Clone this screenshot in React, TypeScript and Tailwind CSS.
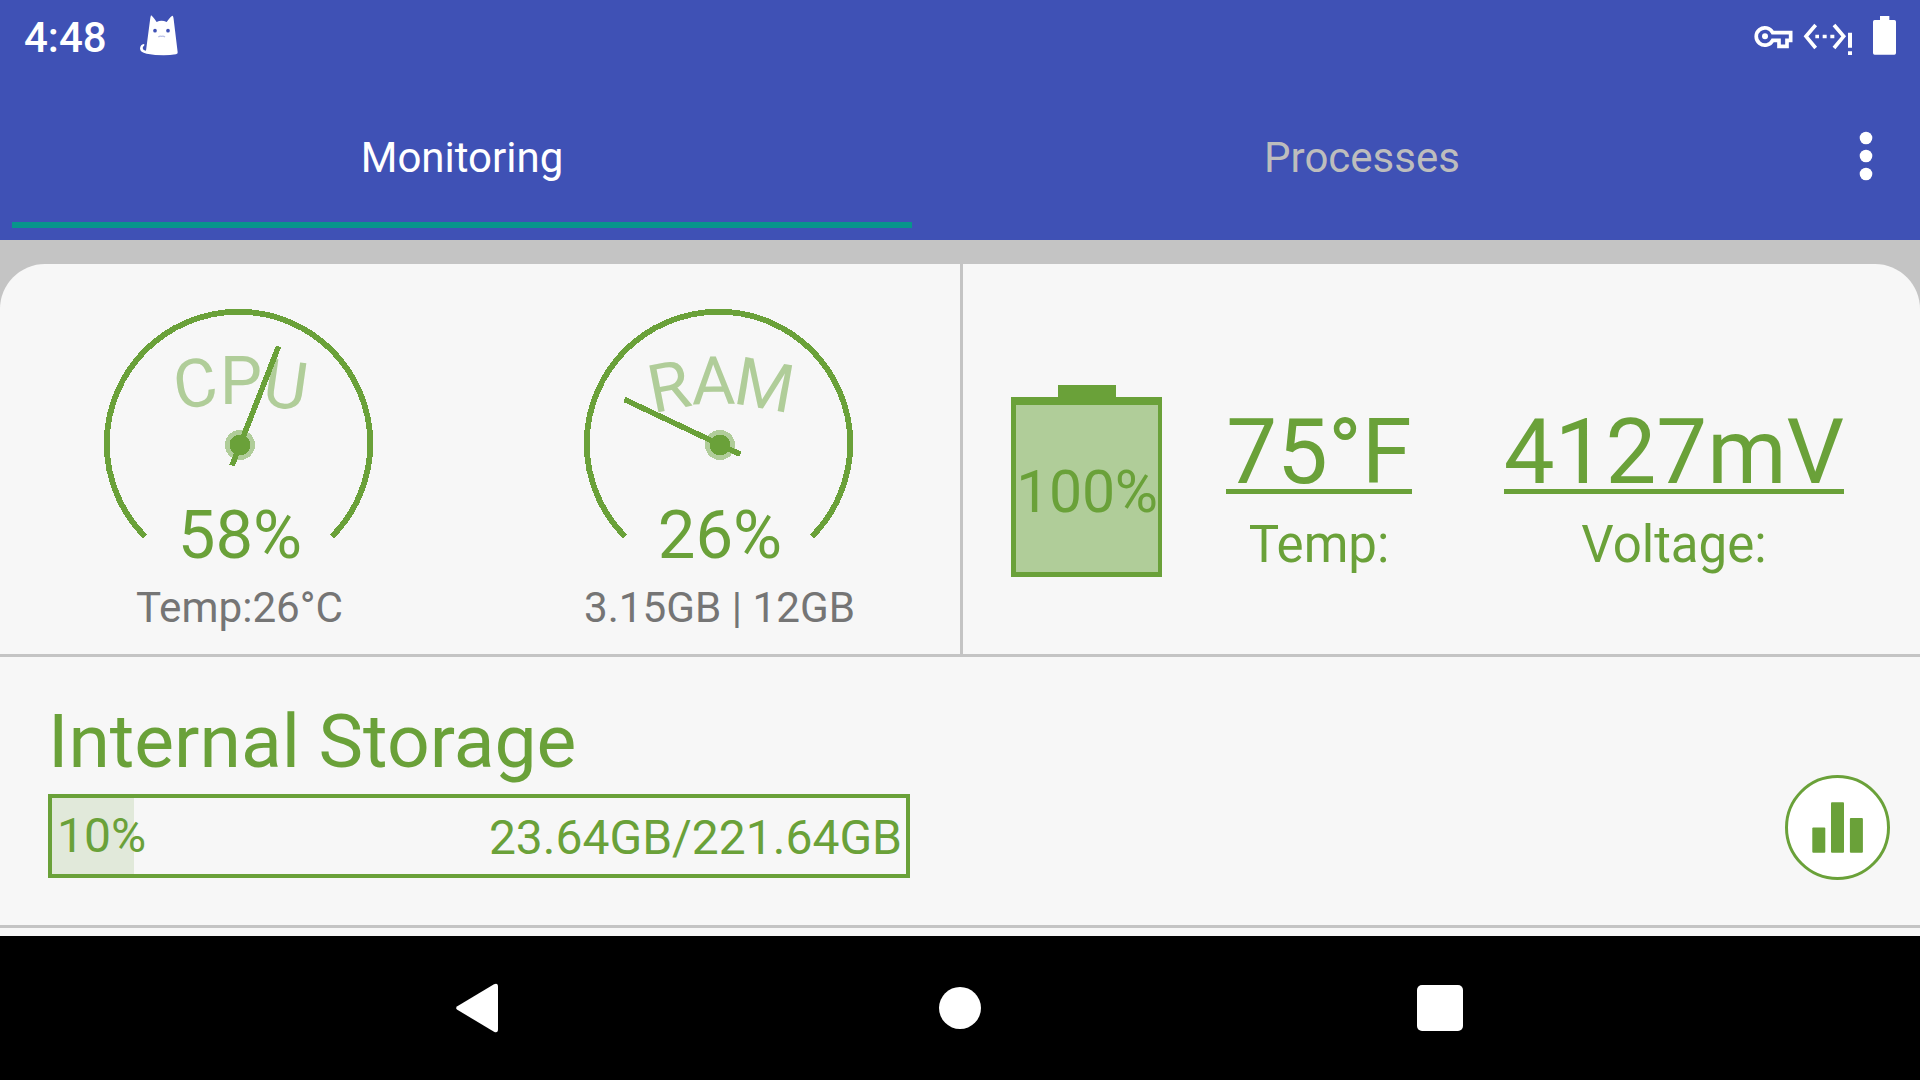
import React from "react";

const GREEN = "#6aa139";
const PALE = "#b0cd99";

type Letter = { char: string; x: number; y: number; angle: number };

type GaugeProps = {
  letters: Letter[];
  percent: string;
  needle: [number, number, number, number];
  caption: string;
};

function Gauge({ letters, percent, needle, caption }: GaugeProps) {
  const [x1, y1, x2, y2] = needle;
  return (
    <div className="flex w-[480px] flex-col items-center">
      <svg width="480" height="316" viewBox="0 0 480 316" fontFamily="Roboto, sans-serif" fontSize="67">
        {letters.map((l) => (
          <text key={l.char} textAnchor="middle" fill={PALE} transform={`translate(${l.x} ${l.y}) rotate(${l.angle})`}>
            {l.char}
          </text>
        ))}
        <g shapeRendering="crispEdges">
          <path d="M145 272.400A131.8 131.8 0 1 1 332 272.400" fill="none" stroke={GREEN} strokeWidth="5.8" />
          <circle cx="240" cy="181" r="15" fill={PALE} />
          <circle cx="240" cy="181" r="10.5" fill={GREEN} />
          <line x1={x1} y1={y1} x2={x2} y2={y2} stroke={GREEN} strokeWidth="5.5" />
        </g>
        <text x="240" y="294" textAnchor="middle" fill={GREEN}>{percent}</text>
      </svg>
      <p className="mr-px text-[42.2px] leading-[56px] whitespace-nowrap text-[#757575]">{caption}</p>
    </div>
  );
}

function Reading({ value, label, className }: { value: string; label: string; className: string }) {
  return (
    <div className={`flex flex-col items-center pt-[151px] ${className}`}>
      <p className="h-[79px] border-b-[5px] border-[#6aa139] text-[90.5px] leading-[75px] whitespace-nowrap">{value}</p>
      <p className="mt-[17px] text-[51px] leading-[68px] whitespace-nowrap">{label}</p>
    </div>
  );
}

function StatusBar() {
  return (
    <div className="flex h-[72px] items-start justify-between">
      <div className="flex">
        <span className="ml-6 w-[116px] pt-[10px] text-[42px] leading-[56px] font-medium">4:48</span>
        <svg className="mt-[15px]" width="40" height="42" viewBox="0 0 120 126">
          <path
            d="M33 1Q36 1 50 21Q64 14 80 21Q94 2 97 2Q100 2 101 13L113 112Q114 117 108 118Q66 124 20 116Q0 113 0 100Q2 88 11 87Q16 89 12 92Q5 97 11 105L18 107L31 8Z"
            fill="white"
          />
          <circle cx="45" cy="47" r="5.5" fill="#3f51b5" />
          <circle cx="84" cy="47" r="5.5" fill="#3f51b5" />
          <path d="M55 66Q60 62 65 64Q70 62 75 66" fill="none" stroke="#b9c0e6" strokeWidth="4" />
        </svg>
      </div>
      <svg width="168" height="72" viewBox="96 0 504 216" fill="none" stroke="white" strokeWidth="11">
        <path d="M158 98A26 26 0 1 0 158 121H177V139H201V121H212V98Z" />
        <circle cx="135" cy="109" r="9" fill="white" stroke="none" />
        <path d="M287 75L258 109L287 144M342 75L371 109L342 144" />
        <path d="M286 109.500H297M308 109.500H320M331 109.500H343" />
        <path d="M390 98V143M390 154V165" strokeWidth="12" />
        <path d="M480 48H508V60H523Q528 60 528 65V159Q528 164 523 164H464Q459 164 459 159V65Q459 60 464 60H480Z" fill="white" stroke="none" />
      </svg>
    </div>
  );
}

export default function App() {
  return (
    <div className="flex h-[1080px] w-[1920px] flex-col overflow-hidden bg-[#c4c4c4] font-['Roboto',sans-serif]">
      <header className="h-60 bg-[#3f51b5] text-white">
        <StatusBar />
        <nav className="flex h-[156px] pl-3 text-[42px] leading-[56px]">
          <div className="flex w-[900px] flex-col items-center border-b-[6px] border-[#07958b] pt-[58px]">Monitoring</div>
          <div className="flex w-[900px] flex-col items-center pt-[58px] text-[#bdbdbd]">Processes</div>
          <div className="flex w-[108px] justify-center pt-[58px]">
            <svg width="16" height="52" viewBox="0 0 16 52" fill="white">
              <circle cx="8" cy="8" r="6.3" />
              <circle cx="8" cy="26" r="6.3" />
              <circle cx="8" cy="44" r="6.3" />
            </svg>
          </div>
        </nav>
      </header>

      <main className="mt-6 flex h-[672px] flex-col rounded-t-[45px] bg-[#f7f7f7] text-[#6aa139]">
        <section className="flex h-[393px] border-b-[3px] border-[#c4c4c4]">
          <div className="flex w-[963px] border-r-[3px] border-[#c4c4c4]">
            <Gauge
              letters={[
                { char: "C", x: 198.3, y: 142.500, angle: -8 },
                { char: "P", x: 241, y: 140, angle: 0 },
                { char: "U", x: 282.600, y: 144, angle: 8 },
              ]}
              percent="58%"
              needle={[278.5, 82.5, 232, 201.5]}
              caption="Temp:26°C"
            />
            <Gauge
              letters={[
                { char: "R", x: 193.2, y: 145.2, angle: -11 },
                { char: "A", x: 233.8, y: 140, angle: -1 },
                { char: "M", x: 280.5, y: 144, angle: 10 },
              ]}
              percent="26%"
              needle={[144.5, 135.5, 260.3, 190.3]}
              caption="3.15GB | 12GB"
            />
          </div>
          <div className="flex pl-12">
            <div className="flex w-[151px] flex-col items-center pt-[121px]">
              <div className="h-3 w-[58px] bg-[#6aa139]" />
              <div className="flex h-[180px] w-[151px] justify-center border-t-8 border-r-4 border-b-[5px] border-l-[5px] border-[#6aa139] bg-[#b0cd99] pt-[51px] text-[59px] leading-[72px] tracking-[-0.3px]">
                100%
              </div>
            </div>
            <Reading value="75°F" label="Temp:" className="w-[314px]" />
            <Reading value="4127mV" label="Voltage:" className="w-[396px]" />
          </div>
        </section>

        <section className="flex h-[271px] justify-between border-b-[3px] border-[#c4c4c4] pr-[30px] pl-12">
          <div className="pt-10">
            <h2 className="text-[75px] leading-[88px] whitespace-nowrap">Internal Storage</h2>
            <div className="mt-[9px] flex h-[84px] w-[862px] justify-between border-4 border-[#6aa139] pr-1 text-[48px] leading-[56px]">
              <div className="w-[82px] bg-[#e1e9da] pt-[10px] pl-[5px] whitespace-nowrap">10%</div>
              <div className="pt-3">23.64GB/221.64GB</div>
            </div>
          </div>
          <button className="mt-[118px] flex size-[105px] items-center justify-center rounded-full border-[3px] border-[#6aa139] bg-white">
            <svg width="99" height="99" viewBox="0 0 99 99" fill={GREEN}>
              <rect x="24.300" y="49.500" width="13" height="25.200" rx="1" />
              <rect x="43" y="24.200" width="13" height="50.500" rx="1" />
              <rect x="61.900" y="40" width="13" height="34.700" rx="1" />
            </svg>
          </button>
        </section>
      </main>

      <footer className="flex h-36 items-center justify-center bg-black">
        <div className="flex w-[480px] justify-center">
          <svg width="48" height="50" viewBox="0 0 48 50">
            <path d="M1.300 23.200L38 1.300Q42 -0.500 42 4V46Q42 50.500 38 48.700L1.300 26.800Q-1 25 1.300 23.200Z" fill="white" />
          </svg>
        </div>
        <div className="flex w-[480px] justify-center">
          <div className="size-[42px] rounded-full bg-white" />
        </div>
        <div className="flex w-[480px] justify-center">
          <div className="size-[46px] rounded-[5px] bg-white" />
        </div>
      </footer>
    </div>
  );
}
